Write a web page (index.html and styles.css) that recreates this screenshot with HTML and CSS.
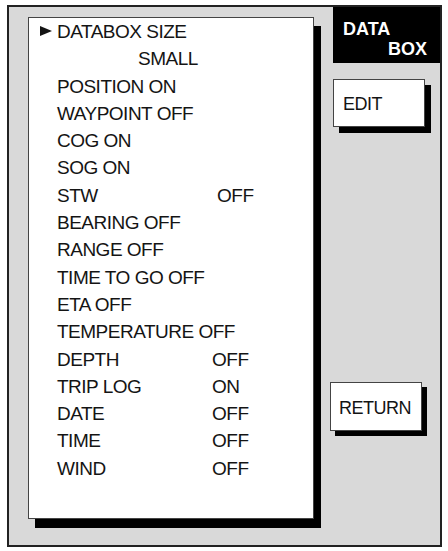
FILE: index.html
```html
<!DOCTYPE html>
<html>
<head>
<meta charset="utf-8">
<link rel="stylesheet" href="styles.css">
</head>
<body>
<div class="frame">
  <div class="panel">
    <div class="row"><svg class="cursor" width="12" height="10" viewBox="0 0 12 10"><polygon points="0,0 12,5 0,10" fill="#141414"/></svg>DATABOX SIZE</div>
    <div class="row sub">SMALL</div>
    <div class="row">POSITION ON</div>
    <div class="row">WAYPOINT OFF</div>
    <div class="row">COG ON</div>
    <div class="row">SOG ON</div>
    <div class="row pair"><span>STW</span><span class="val shift">OFF</span></div>
    <div class="row">BEARING OFF</div>
    <div class="row">RANGE OFF</div>
    <div class="row">TIME TO GO OFF</div>
    <div class="row">ETA OFF</div>
    <div class="row">TEMPERATURE OFF</div>
    <div class="row pair"><span>DEPTH</span><span class="val">OFF</span></div>
    <div class="row pair"><span>TRIP LOG</span><span class="val">ON</span></div>
    <div class="row pair"><span>DATE</span><span class="val">OFF</span></div>
    <div class="row pair"><span>TIME</span><span class="val">OFF</span></div>
    <div class="row pair"><span>WIND</span><span class="val">OFF</span></div>
  </div>
  <div class="side">
    <div class="title">
      <div>DATA</div>
      <div class="title-right">BOX</div>
    </div>
    <div class="btn btn-edit">EDIT</div>
    <div class="btn btn-return">RETURN</div>
  </div>
</div>
</body>
</html>
```

FILE: styles.css
```css
html, body {
  margin: 0;
  padding: 0;
  background: #ffffff;
}

body {
  font-family: "Liberation Sans", Arial, sans-serif;
  color: #141414;
}

.frame {
  box-sizing: border-box;
  margin: 5px 0 0 7px;
  width: 435px;
  height: 542px;
  border: 2px solid #222222;
  background: #d9d9d9;
  display: flex;
  align-items: flex-start;
}

.panel {
  box-sizing: border-box;
  margin: 10px 0 0 19px;
  width: 286px;
  height: 502px;
  background: #ffffff;
  border: 1px solid #444444;
  box-shadow: 7px 9px 0 #000000;
  padding: 0 0 0 28px;
  font-size: 19px;
  letter-spacing: -0.5px;
  line-height: 27.3px;
}

.row {
  white-space: nowrap;
  position: relative;
}

.cursor {
  position: absolute;
  left: -17px;
  top: 8px;
}

.sub {
  padding-left: 81px;
}

.pair {
  display: grid;
  grid-template-columns: 155px auto;
}

.val.shift {
  padding-left: 5px;
}

.side {
  margin-left: 19px;
  width: 107px;
  display: flex;
  flex-direction: column;
  align-items: flex-start;
}

.title {
  box-sizing: border-box;
  width: 107px;
  height: 56px;
  background: #000000;
  color: #ffffff;
  font-weight: bold;
  font-size: 18px;
  line-height: 20px;
  padding: 12px 13px 0 10px;
}

.title-right {
  text-align: right;
}

.btn {
  box-sizing: border-box;
  width: 92px;
  background: #ffffff;
  border: 1px solid #444444;
  font-size: 18px;
  letter-spacing: -0.5px;
  line-height: 20px;
}

.btn-edit {
  height: 48px;
  margin-top: 16px;
  padding: 14px 0 0 9px;
  box-shadow: 6px 6px 0 #000000;
}

.btn-return {
  height: 49px;
  margin-top: 255px;
  margin-left: -3px;
  padding: 15px 0 0 8px;
  box-shadow: 5px 5px 0 #000000;
}
```
